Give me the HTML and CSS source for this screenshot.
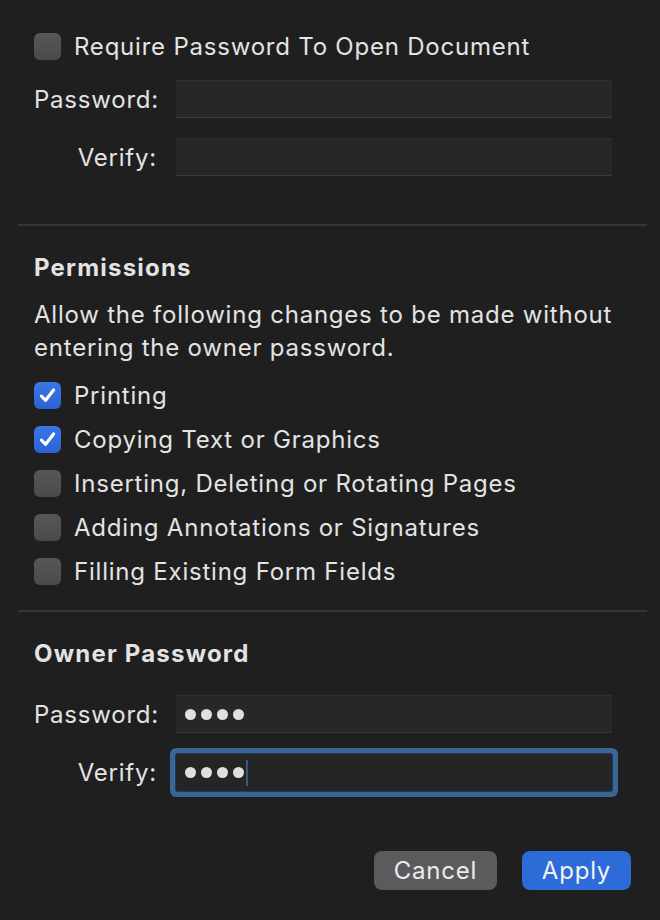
FILE: index.html
```html
<!DOCTYPE html>
<html lang="en">
<head>
    <meta charset="UTF-8">
    <meta name="viewport" content="width=device-width, initial-scale=1.0">
    <title>Security Options</title>
    <link rel="stylesheet" href="styles.css">
</head>
<body>
    <div class="sheet">
        <section class="section open-section">
            <label class="check-row">
                <span class="box"></span>
                <span>Require Password To Open Document</span>
            </label>
            <div class="field-row first">
                <span class="field-label">Password:</span>
                <div class="field"></div>
            </div>
            <div class="field-row">
                <span class="field-label">Verify:</span>
                <div class="field"></div>
            </div>
        </section>

        <div class="divider"></div>

        <section class="section perm-section">
            <h2>Permissions</h2>
            <p class="desc">Allow the following changes to be made without entering the owner password.</p>
            <div class="checks">
                <label class="check-row">
                    <span class="box checked">
                        <svg viewBox="0 0 20 20" width="21" height="21"><path d="M4.2 10.6 L8.2 14.6 L15.8 4.8" fill="none" stroke="#fff" stroke-width="3" stroke-linecap="round" stroke-linejoin="round"/></svg>
                    </span>
                    <span>Printing</span>
                </label>
                <label class="check-row">
                    <span class="box checked">
                        <svg viewBox="0 0 20 20" width="21" height="21"><path d="M4.2 10.6 L8.2 14.6 L15.8 4.8" fill="none" stroke="#fff" stroke-width="3" stroke-linecap="round" stroke-linejoin="round"/></svg>
                    </span>
                    <span>Copying Text or Graphics</span>
                </label>
                <label class="check-row">
                    <span class="box"></span>
                    <span>Inserting, Deleting or Rotating Pages</span>
                </label>
                <label class="check-row">
                    <span class="box"></span>
                    <span>Adding Annotations or Signatures</span>
                </label>
                <label class="check-row">
                    <span class="box"></span>
                    <span>Filling Existing Form Fields</span>
                </label>
            </div>
        </section>

        <div class="divider lower"></div>

        <section class="section owner-section">
            <h2>Owner Password</h2>
            <div class="field-row first">
                <span class="field-label">Password:</span>
                <div class="field">
                    <span class="dots"><i></i><i></i><i></i><i></i></span>
                </div>
            </div>
            <div class="field-row focus-row">
                <span class="field-label">Verify:</span>
                <div class="field focused">
                    <span class="dots"><i></i><i></i><i></i><i></i></span>
                    <span class="caret"></span>
                </div>
            </div>
        </section>

        <div class="buttons">
            <button class="btn cancel">Cancel</button>
            <button class="btn apply">Apply</button>
        </div>
    </div>
</body>
</html>
```

FILE: styles.css
```css
body {
    margin: 0;
    padding: 0;
    background-color: #1f1f1f;
    color: #e3e3e3;
    font-family: 'Inter', 'Liberation Sans', sans-serif;
    font-size: 24px;
    letter-spacing: 0.78px;
}
.sheet {
    width: 660px;
    height: 920px;
    box-sizing: border-box;
    padding-top: 32px;
}
.section {
    padding: 0 34px;
}
.check-row {
    display: flex;
    align-items: center;
    gap: 13px;
    height: 28px;
}
.box {
    width: 27px;
    height: 27px;
    flex: none;
    border-radius: 6px;
    background: linear-gradient(#575757, #4a4a4a);
    display: flex;
    align-items: center;
    justify-content: center;
}
.box.checked {
    background: linear-gradient(#3a76e8, #2c62d6);
}
.field-row {
    display: flex;
    align-items: center;
    margin-top: 20px;
}
.field-label {
    width: 123px;
    text-align: right;
    margin-right: 19px;
    flex: none;
}
.field {
    width: 436px;
    height: 38px;
    box-sizing: border-box;
    background-color: #272727;
    border-top: 1px solid #2f2f2f;
    border-bottom: 1px solid #3a3a3a;
    display: flex;
    align-items: center;
    padding-left: 9px;
}
.field.focused {
    height: 37px;
    background-color: #252525;
    border: none;
    box-shadow: 0 0 0 1px #1d3a5c, 0 0 0 6px #3b6592;
    border-radius: 2px;
}
.focus-row {
    margin-top: 21px;
}
.dots {
    display: flex;
    gap: 5px;
}
.dots i {
    width: 11px;
    height: 11px;
    border-radius: 50%;
    background-color: #e0e0e0;
}
.caret {
    width: 2px;
    height: 26px;
    margin-left: 2px;
    background-color: #3a5480;
}
.divider {
    height: 2px;
    background-color: #353535;
    margin: 48px 13px 0 18px;
}
.divider.lower {
    margin-top: 25px;
}
h2 {
    margin: 0;
    font-size: 24px;
    font-weight: 700;
    line-height: 28px;
    letter-spacing: 1.2px;
}
.perm-section {
    padding-top: 28px;
}
.desc {
    margin: 16px 0 0;
    line-height: 33px;
    width: 590px;
}
.checks {
    display: flex;
    flex-direction: column;
    gap: 16px;
    margin-top: 17px;
}
.owner-section {
    padding-top: 28px;
}
.owner-section .field-row.first {
    margin-top: 27px;
}
.buttons {
    display: flex;
    justify-content: flex-end;
    gap: 25px;
    padding-right: 29px;
    margin-top: 60px;
}
.btn {
    height: 39px;
    border: none;
    border-radius: 8px;
    font-family: 'Inter', 'Liberation Sans', sans-serif;
    font-size: 24px;
    letter-spacing: 0.78px;
    color: #ececec;
    padding: 0;
}
.cancel {
    width: 123px;
    background-color: #5b5b5d;
}
.apply {
    width: 109px;
    background-color: #2d6bd9;
    color: #f2f2f2;
}
```
